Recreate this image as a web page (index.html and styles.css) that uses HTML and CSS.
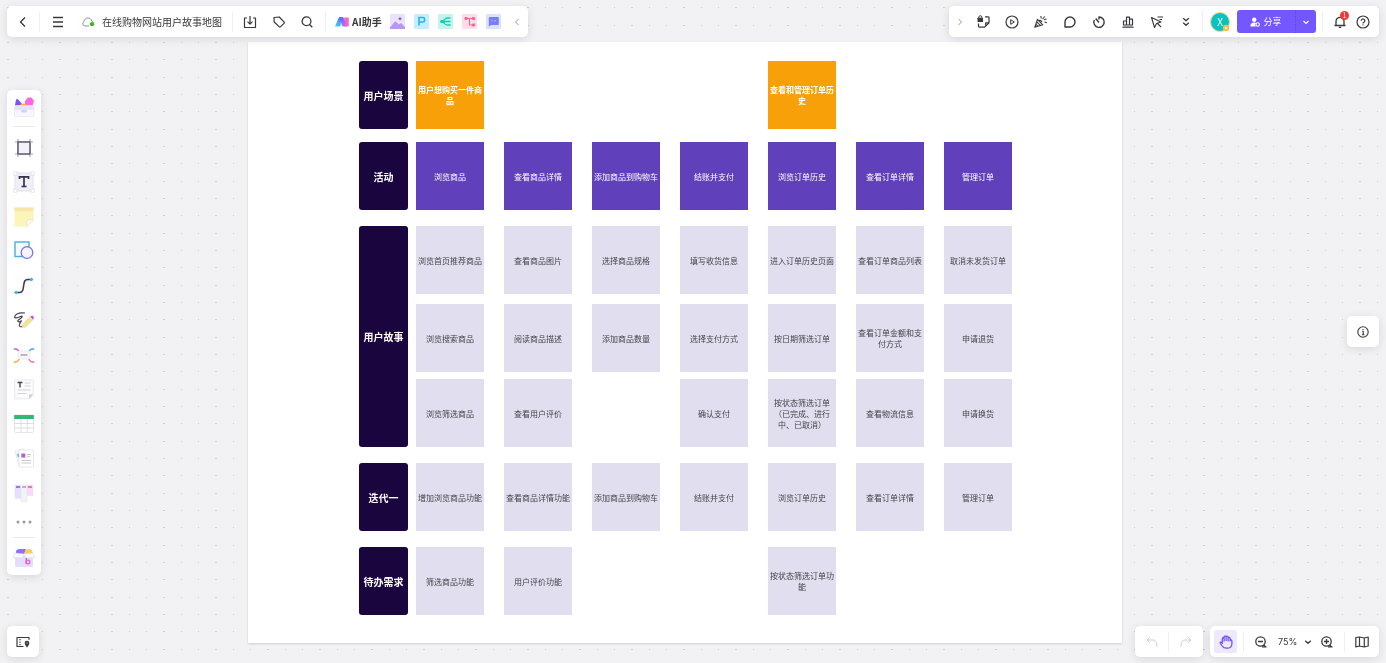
FILE: index.html
```html
<!DOCTYPE html>
<html lang="zh-CN">
<head>
<meta charset="utf-8">
<meta name="viewport" content="width=device-width, initial-scale=1">
<title>在线购物网站用户故事地图</title>
<link rel="stylesheet" href="styles.css">
</head>
<body>
<svg class="dots" aria-hidden="true">
  <defs>
    <pattern id="dot-grid" width="52" height="52" patternUnits="userSpaceOnUse">
      <g fill="#cdcdd2">
        <rect x="7" y="7" width="2" height="1"/><rect x="25" y="7" width="1" height="1"/><rect x="42" y="7" width="1" height="1"/>
        <rect x="7" y="25" width="2" height="1"/><rect x="25" y="25" width="1" height="1"/><rect x="42" y="25" width="1" height="1"/>
        <rect x="7" y="42" width="2" height="1"/><rect x="25" y="42" width="1" height="1"/><rect x="42" y="42" width="1" height="1"/>
      </g>
    </pattern>
  </defs>
  <rect width="100%" height="100%" fill="url(#dot-grid)"/>
</svg>

<main class="board">
  <section class="row row-scene">
    <h2 class="label">用户场景</h2>
    <div class="cards">
      <div class="card scene">用户想购买一件商品</div>
      <div class="card scene col-5">查看和管理订单历史</div>
    </div>
  </section>
  <section class="row">
    <h2 class="label">活动</h2>
    <div class="cards">
      <div class="card activity">浏览商品</div>
      <div class="card activity">查看商品详情</div>
      <div class="card activity">添加商品到购物车</div>
      <div class="card activity">结账并支付</div>
      <div class="card activity">浏览订单历史</div>
      <div class="card activity">查看订单详情</div>
      <div class="card activity">管理订单</div>
    </div>
  </section>
  <section class="row">
    <h2 class="label">用户故事</h2>
    <div class="cards stories">
      <div class="card">浏览首页推荐商品</div>
      <div class="card">查看商品图片</div>
      <div class="card">选择商品规格</div>
      <div class="card">填写收货信息</div>
      <div class="card">进入订单历史页面</div>
      <div class="card">查看订单商品列表</div>
      <div class="card">取消未发货订单</div>
      <div class="card">浏览搜索商品</div>
      <div class="card">阅读商品描述</div>
      <div class="card">添加商品数量</div>
      <div class="card">选择支付方式</div>
      <div class="card">按日期筛选订单</div>
      <div class="card">查看订单金额和支付方式</div>
      <div class="card">申请退货</div>
      <div class="card">浏览筛选商品</div>
      <div class="card">查看用户评价</div>
      <div class="card col-4">确认支付</div>
      <div class="card">按状态筛选订单（已完成、进行中、已取消）</div>
      <div class="card">查看物流信息</div>
      <div class="card">申请换货</div>
    </div>
  </section>
  <section class="row">
    <h2 class="label">迭代一</h2>
    <div class="cards">
      <div class="card">增加浏览商品功能</div>
      <div class="card">查看商品详情功能</div>
      <div class="card">添加商品到购物车</div>
      <div class="card">结账并支付</div>
      <div class="card">浏览订单历史</div>
      <div class="card">查看订单详情</div>
      <div class="card">管理订单</div>
    </div>
  </section>
  <section class="row">
    <h2 class="label">待办需求</h2>
    <div class="cards">
      <div class="card">筛选商品功能</div>
      <div class="card">用户评价功能</div>
      <div class="card col-5">按状态筛选订单功能</div>
    </div>
  </section>
</main>

<header class="panel bar bar-file">
  <button class="btn w32" aria-label="返回"><svg class="ico" width="16" height="16" viewBox="0 0 16 16"><path d="M10 3.500 5.500 8l4.500 4.500" stroke-width="1.300"/></svg></button>
  <span class="sep"></span>
  <button class="btn w36" aria-label="菜单"><svg class="ico" width="16" height="16" viewBox="0 0 16 16"><path d="M3 3.500h10M3 8h10M3 12.500h10" stroke-width="1.300"/></svg></button>
  <span class="btn w24"><svg class="ico" width="16" height="16" viewBox="0 0 16 16"><path d="M9 12H4.800A2.400 2.400 0 0 1 4 7.500C4.200 5.300 6 4 7.900 4c1.900 0 3.400 1.200 3.800 3.100.9.200 1.500.7 1.900 1.400" stroke="#909095" stroke-width="1"/><circle cx="12" cy="10.200" r="2.100" fill="#38b71b" stroke="none"/></svg></span>
  <h1 class="title">在线购物网站用户故事地图</h1>
  <span class="sep"></span>
  <button class="btn w34" aria-label="导出"><svg class="ico" width="16" height="16" viewBox="0 0 16 16"><path d="M5 4H2.500v9.500h11V4H11M8 2v8M5.500 7.600 8 10.100l2.500-2.500" stroke-width="1.200"/></svg></button>
  <button class="btn w24" aria-label="标签"><svg class="ico" width="16" height="16" viewBox="0 0 16 16"><path d="M3 3.500 8.200 3l5 5.200q.5.500 0 1l-3.800 3.700q-.5.500-1 0L3.200 8Z" stroke-width="1.200"/></svg></button>
  <button class="btn w32" aria-label="搜索"><svg class="ico" width="16" height="16" viewBox="0 0 16 16"><circle cx="7.500" cy="7.300" r="4.400" stroke-width="1.300"/><path d="m10.700 10.700 2.600 2.600" stroke-width="1.300"/></svg></button>
  <span class="sep gap-l2"></span>
  <button class="ai"><svg width="14" height="10" viewBox="0 0 14 10"><defs><linearGradient id="ai-a" x1="0" y1="1" x2="1" y2="0"><stop stop-color="#2be5f2"/><stop offset="1" stop-color="#5a6aff"/></linearGradient><linearGradient id="ai-b" x1="0" y1="0" x2="1" y2="1"><stop stop-color="#5a62ff"/><stop offset=".6" stop-color="#9d6df8"/><stop offset="1" stop-color="#e66ae0"/></linearGradient></defs><path d="M9 .5h4q.8 0 .8.800v7q0 1.200-1.300 1.200H10Z" fill="#ff66be"/><path d="M0 9.500 3.500.9Q4 0 5 0h1.500L5.500 8.200Q5 9.500 3.800 9.500Z" fill="url(#ai-a)"/><path d="M4.500 0h2.700q1 0 1.500 1l3.300 7q.5 1.500-1 1.500H8.500Q7.500 9.500 7 8.500Z" fill="url(#ai-b)"/></svg><span>AI助手</span></button>
  <button class="btn w24 gap-l4" aria-label="AI 图片"><svg width="15" height="15" viewBox="0 0 15 15"><rect width="15" height="15" rx="1" fill="#ebe3fd"/><path d="M0 13.500 4.500 8q1-1 2 0L9 10.500l1-1q.8-.8 1.600 0L15 13v2H0Z" fill="#b79af0"/><path d="M10 2.500q.3 1.900 2.200 2.200Q10.300 5 10 6.900 9.700 5 7.800 4.700 9.700 4.400 10 2.500Z" fill="#865be8"/></svg></button>
  <button class="btn w24" aria-label="AI PPT"><svg width="15" height="15" viewBox="0 0 15 15"><rect width="15" height="15" rx="1" fill="#c5edff"/><path d="M5 11.500v-8h4q1.500 0 1.500 1.500v1.500Q10.500 8 9 8H5" fill="none" stroke="#25b2f2" stroke-width="1.600"/></svg></button>
  <button class="btn w24" aria-label="AI 思维导图"><svg width="15" height="15" viewBox="0 0 15 15"><rect width="15" height="15" rx="1" fill="#c3f5ed"/><path d="M12.500 4H9.500Q7.500 4 6.500 5.500L5 7.500l1.500 2Q7.500 11 9.500 11h3M5 7.500h7.500" fill="none" stroke="#17cdb4" stroke-width="1.300"/><rect x="2" y="6" width="4" height="3" rx="1.500" fill="#17cdb4"/></svg></button>
  <button class="btn w24" aria-label="AI 流程图"><svg width="15" height="15" viewBox="0 0 15 15"><rect width="15" height="15" rx="1" fill="#ffdce8"/><path d="M4.500 4.500h7M7.500 4.500v6.500h4" fill="none" stroke="#fa5f94"/><g fill="#fa5f94"><rect x="2.500" y="3" width="3" height="3" rx="1"/><rect x="10" y="3" width="3" height="3" rx="1"/><rect x="10" y="9.500" width="3" height="3" rx="1"/></g></svg></button>
  <button class="btn w24" aria-label="AI 对话"><svg width="15" height="15" viewBox="0 0 15 15"><rect width="15" height="15" rx="1" fill="#d7e3ff"/><path d="M4 3h8q.8 0 .8.800v6.400q0 .8-.8.800H5.500L2.800 12.500V4Q2.800 3 4 3Z" fill="#7c7cf7"/><path d="M6 6v1.500M9.300 6v1.500" stroke="#b9c0ff"/></svg></button>
  <button class="btn w22" aria-label="收起"><svg class="ico" width="12" height="12" viewBox="0 0 12 12"><path d="M7.500 3 4.500 6l3 3" stroke="#999"/></svg></button>
</header>

<nav class="panel bar bar-share" aria-label="协作">
  <button class="btn w22" aria-label="展开"><svg class="ico" width="12" height="12" viewBox="0 0 12 12"><path d="m4.500 3 3 3-3 3" stroke="#999"/></svg></button>
  <button class="btn w26" aria-label="私密模式"><svg class="ico" width="16" height="16" viewBox="0 0 16 16"><path d="M9 2.800h3.200q.8 0 .8.800v5.200l-2.500 2.500h-.8M2.500 9.500v2.800q0 .8.800.8h5.400l1-1V8.800h2.800" stroke-width="1.200"/><rect x="1.500" y="3.800" width="5.500" height="4.200" rx=".5" fill="#39393d" stroke="none"/><path d="M2.800 4V3.200a1.500 1.500 0 0 1 3 0V4"/></svg></button>
  <button class="btn w29" aria-label="演示"><svg class="ico" width="16" height="16" viewBox="0 0 16 16"><circle cx="8" cy="8" r="6" stroke-width="1.200"/><path d="M6.700 5.700v4.600l3.600-2.300Z"/></svg></button>
  <button class="btn w29" aria-label="庆祝"><svg class="ico" width="16" height="16" viewBox="0 0 16 16"><path d="m4.500 5.300-2.700 8 8-2.500ZM3.800 7.800l4 4M3 10.300l2.200 2.200M7.800 2l.5 2.500M11.800 2.500 9.500 5M11.500 8l2.500.8M11 5.800l2.500-.8M6 6.500q2-.5 3 1.500" stroke-width="1.100"/></svg></button>
  <button class="btn w29" aria-label="评论"><svg class="ico" width="16" height="16" viewBox="0 0 16 16"><path d="M3 13V8a5 5 0 1 1 5 5Z" stroke-width="1.400"/></svg></button>
  <button class="btn w29" aria-label="计时器"><svg class="ico" width="16" height="16" viewBox="0 0 16 16"><path d="M8 5.500V3a5.200 5.200 0 1 1-4.700 3M4.700 4.500 8 8.500" stroke-width="1.400"/></svg></button>
  <button class="btn w29" aria-label="投票"><svg class="ico" width="16" height="16" viewBox="0 0 16 16"><path d="M2.500 13.200h11M3.500 11V7h3v4M6.500 11V3.200h3V11M9.500 11V5.200h3V11M3 11h10" stroke-width="1.200"/></svg></button>
  <button class="btn w29" aria-label="激光笔"><svg class="ico" width="16" height="16" viewBox="0 0 16 16"><path d="m2.500 3.500 3 10 2-4 4.500-1.500ZM8 9l4 4M8.500 3h5.500M10.500 5.500H13" stroke-width="1.100"/></svg></button>
  <button class="btn w29" aria-label="更多"><svg class="ico" width="16" height="16" viewBox="0 0 16 16"><path d="M5.200 4.200 8 6.700l2.800-2.500M5.200 8.700 8 11.200l2.800-2.500" stroke-width="1.300"/></svg></button>
  <span class="sep gap-l2"></span>
  <button class="btn w34" aria-label="用户 X"><span class="avatar">X<svg class="crown" width="8" height="8" viewBox="0 0 8 8"><circle cx="4" cy="4" r="3.200" fill="#ffbb45"/><circle cx="4" cy="4" r="1.300" fill="#ffe9c2"/></svg></span></button>
  <div class="share">
    <button class="share-main"><svg width="10" height="10" viewBox="0 0 10 10"><circle cx="4.200" cy="2.700" r="2.200" fill="#fff"/><path d="M.3 9.500q0-4 3.900-4 1.300 0 2 .5L5 7.500l.8 2Z" fill="#fff"/><circle cx="7.700" cy="7.500" r="1.700" fill="none" stroke="#fff" stroke-width="1.100"/></svg><span>分享</span></button>
    <button class="share-more" aria-label="分享选项"><svg width="10" height="10" viewBox="0 0 10 10"><path d="m2.500 4 2.500 2.500L7.500 4" fill="none" stroke="#fff" stroke-width="1.200"/></svg></button>
  </div>
  <span class="sep gap-share"></span>
  <button class="btn w24 notify" aria-label="通知"><svg class="ico" width="16" height="16" viewBox="0 0 16 16"><path d="M2.500 11.500h11M4 11.500V7.300a4 4 0 0 1 8 0v4.200M6.800 13.300h2.400" stroke-width="1.300"/></svg><span class="badge">1</span></button>
  <button class="btn w22" aria-label="帮助"><svg class="ico" width="16" height="16" viewBox="0 0 16 16"><circle cx="8" cy="8" r="6" stroke-width="1.200"/><path d="M6.200 6.700a1.800 1.800 0 1 1 2.700 1.600q-.9.400-.9 1.300M8 10.500v1" stroke-width="1.200"/></svg></button>
</nav>

<aside class="panel tools" aria-label="工具">
  <button class="tool-top" aria-label="素材"><svg width="24" height="24" viewBox="0 0 24 24"><path d="m3 10 1-5q.5-1.500 2-.8L10 9v3H3Z" fill="#7656f5"/><path d="M13 10V6l3-3.500h3.500L22 6l-1.500 5H13Z" fill="#ff66df"/><path d="M7 11a5 4.500 0 0 1 9 0Z" fill="#fcaa3c"/><rect x="2.500" y="10.500" width="19.500" height="11" rx="1.200" fill="#f7f7fd" stroke="#e2e1ea" stroke-width=".6"/><path d="M3 10.500h18.500v4.500H3Z" fill="#e6e3fa"/><rect x="9" y="15" width="6" height="2.600" rx="1" fill="#d5d0fa"/></svg></button>
  <hr>
  <div class="tool-list">
    <button aria-label="画框"><svg width="22" height="22" viewBox="0 0 22 22"><path d="M2 5h18M2 17h18M5 2v18M17 2v18" stroke="#aaa7b8" stroke-width="1.200" stroke-dasharray="3 1"/><rect x="5" y="5" width="12" height="12" fill="#f3f2fa" stroke="#565063" stroke-width="1.400"/></svg></button>
    <button aria-label="文本"><svg width="22" height="22" viewBox="0 0 22 22"><rect x="2" y="2" width="18" height="18" fill="#f0eff8" stroke="#e4e3ec"/><path d="M6.500 8V5.800h9V8M11 5.800V15.500M8.500 15.500h5" fill="none" stroke="#39324e" stroke-width="1.700"/><g fill="#fff" stroke="#dcdbe3" stroke-width=".7"><rect x=".8" y=".8" width="3.200" height="3.200"/><rect x="18" y=".8" width="3.200" height="3.200"/><rect x=".8" y="18" width="3.200" height="3.200"/><rect x="18" y="18" width="3.200" height="3.200"/></g></svg></button>
    <button aria-label="便签"><svg width="22" height="22" viewBox="0 0 22 22"><path d="M1.500 1.500h19V14l-6.500 6.500H2.500q-1 0-1-1Z" fill="#fbf4bb"/><path d="M1.500 1.500h19v3h-19Z" fill="#f7e2a8"/><path d="M2 5h18.500" stroke="#f0dc9c" stroke-width=".8" stroke-dasharray="1 1"/><path d="M14 20.500v-5.200q0-1.300 1.300-1.300h5.200Z" fill="#fffdf4" stroke="#e4e0cc" stroke-width=".7"/></svg></button>
    <button aria-label="形状"><svg width="22" height="22" viewBox="0 0 22 22"><rect x="2" y="2" width="14" height="14.500" fill="#f5fcff" stroke="#41b3e0" stroke-width="1.400"/><circle cx="14" cy="12.500" r="5.800" fill="#f5f3ff" stroke="#7973ea" stroke-width="1.300"/></svg></button>
    <button aria-label="连线"><svg width="22" height="22" viewBox="0 0 22 22"><path d="M4 17.500h2.500q3 0 3.500-3l1.200-7Q11.700 4.500 15 4.500h3" fill="none" stroke="#403750" stroke-width="1.500"/><path d="m1 17.500 2-2 2 2-2 2ZM16.500 4.500l2-2 2 2-2 2Z" fill="#36b8ee"/></svg></button>
    <button aria-label="画笔"><svg width="22" height="22" viewBox="0 0 22 22"><path d="M12 4Q4 3 2 7c-1.500 3 2.500 2 5.500.5C10.500 6 9 9 6 10.500c-3 2 0 3 2 1.500 2-1.500-3.500 4-1 5.500 1 .5 2 0 2.500-.5" fill="none" stroke="#493f57" stroke-width="1.200"/><path d="m9.500 15 8-7.500 3 3-8 7.500-3.500.5Z" fill="#f6e391" stroke="#ddd5ba" stroke-width=".7"/><path d="m17.500 7.500 1.500-1q2 .5 1.800 2.500l-1 1.500Z" fill="#b84ae8"/></svg></button>
    <button aria-label="思维导图"><svg width="22" height="22" viewBox="0 0 22 22"><g fill="none" stroke-width="1.400"><path d="M.8 5h2Q4.500 5 5.500 7L7 8.500" stroke="#b06be0"/><path d="M21.200 5h-2q-1.700 0-2.700 2L15 8.500" stroke="#4aa9ee"/><path d="M.8 18h2q1.700 0 2.700-2L7 14" stroke="#f7a637"/><path d="M21.200 18h-2q-1.700 0-2.700-2L15 14" stroke="#ef6b96"/></g><rect x="5" y="7" width="12" height="8" rx="1" fill="#f6f6f8" stroke="#e6e5eb" stroke-width=".6"/><path d="M7.500 11h7" stroke="#bbb9c2" stroke-width="2"/></svg></button>
    <button aria-label="文档"><svg width="22" height="22" viewBox="0 0 22 22"><path d="M2.500 2h17q.8 0 .8.800V16.500L16 20.800H2.500q-.8 0-.8-.8V2.800q0-.8.800-.8Z" fill="#fcfcfd" stroke="#dedde4" stroke-width=".7"/><path d="M4.500 4.500h5M7 4.500v5" stroke="#493f5a" stroke-width="1.400"/><path d="M11.500 5h6M11.500 8h6M4.500 12h13M4.500 15.500h9" stroke="#d2d1d8"/><path d="M16 20.800v-3.500q0-.8.800-.8h3.500Z" fill="#cbc9d2"/></svg></button>
    <button aria-label="表格"><svg width="22" height="22" viewBox="0 0 22 22"><rect x="1.500" y="2" width="19" height="17.500" rx=".8" fill="#fff" stroke="#dadbe0" stroke-width=".7"/><path d="M1.200 2h19.600v4H1.200Z" fill="#31b675"/><path d="M1.500 10.500h19M1.500 15h19M8 6v13.500M14.300 6v13.500" stroke="#d6d7dc" stroke-width=".8"/></svg></button>
    <button aria-label="卡片"><svg width="22" height="22" viewBox="0 0 22 22"><path d="m2 4 8-2 5 16-9 1.500Z" fill="#f6f6f9" stroke="#e1e1e7" stroke-width=".6"/><path d="m4 7 3-.7v3.500l-2.300.5Z" fill="#49b9ef"/><rect x="6" y="3" width="14.500" height="17" rx="1" fill="#fff" stroke="#dedee5" stroke-width=".7"/><rect x="8.300" y="6.500" width="4" height="4" fill="#bd5adc"/><path d="M14 7.500h4M14 9.800h3M8.500 13.500h9.500M8.500 16h9.500" stroke="#c8c7d0"/></svg></button>
    <button aria-label="看板"><svg width="22" height="22" viewBox="0 0 22 22"><g stroke="#e5e3ee" stroke-width=".6"><path d="M2 3h6v13.500H2Z" fill="#e8dffd"/><path d="M14 3h6v10.500h-6Z" fill="#fcd9f5"/><path d="M8 3h6v17H8Z" fill="#f3f3f5"/></g><path d="M3 5h4" stroke="#9774f3" stroke-width="2"/><path d="M9 5h4" stroke="#b8b7bd" stroke-width="2"/><path d="M15 5h4" stroke="#fa6bcb" stroke-width="2"/></svg></button>
  </div>
  <button class="tool-more" aria-label="更多工具"><svg width="22" height="6" viewBox="0 0 22 6"><g fill="#9b9ba1"><circle cx="5" cy="3" r="1.500"/><circle cx="11" cy="3" r="1.500"/><circle cx="17" cy="3" r="1.500"/></g></svg></button>
  <hr>
  <button class="tool-box" aria-label="模板"><svg width="24" height="24" viewBox="0 0 24 24"><path d="M4 6q0-3 4-3h6l-2 6H4Z" fill="#8d72f6"/><path d="M12 8q1-5 5-5 3 0 4 4l-2 2Z" fill="#fbcd54"/><path d="M3 8h18v11.500q0 1.500-1.500 1.500h-15Q3 21 3 19.500Z" fill="#e4defb"/><path d="m3 7 9 1 9-1 2 4.500-9 .5-2-3-2 3-9-.5Z" fill="#fbfaff" stroke="#dad6ee" stroke-width=".6"/><path d="M14.300 12v6" stroke="#9d67ef" stroke-width="1.300"/><circle cx="16" cy="16" r="1.900" fill="none" stroke="#e65cd0" stroke-width="1.200"/></svg></button>
</aside>

<aside class="panel info"><button class="btn w32" aria-label="信息"><svg class="ico" width="14" height="14" viewBox="0 0 14 14"><circle cx="7" cy="7" r="5.200" stroke-width="1.100"/><path d="M6.200 6.200h1V9.700M6 9.800h2.400M7 4v1" stroke-width="1.100"/></svg></button></aside>

<div class="panel minimap"><button class="btn w32" aria-label="小地图"><svg class="ico" width="16" height="16" viewBox="0 0 16 16"><path d="M8.500 12.500H2v-9h12v2.300M5 5v1.200M5 7.500v1.200M5 10v1.200" stroke-width="1.200"/><path d="M12 6.700a2.300 2.300 0 0 1 2.300 2.300c0 1.900-2.300 4.500-2.300 4.500S9.700 10.900 9.700 9A2.300 2.300 0 0 1 12 6.700Z" fill="#39393d" stroke="none"/><circle cx="12" cy="9" r=".6" fill="#fff" stroke="none"/></svg></button></div>

<footer class="bottom">
  <div class="panel bar">
    <button class="btn w33" aria-label="撤销" disabled><svg class="ico" width="16" height="16" viewBox="0 0 16 16"><path d="M6 3 3 6l3 3M3 6h6q4 0 4 6.500" stroke="#cecdd2"/></svg></button>
    <span class="sep"></span>
    <button class="btn w34" aria-label="重做" disabled><svg class="ico" width="16" height="16" viewBox="0 0 16 16"><path d="m10 3 3 3-3 3M13 6H7q-4 0-4 6.500" stroke="#cecdd2"/></svg></button>
  </div>
  <div class="panel bar view">
    <button class="hand" aria-label="抓手"><svg width="16" height="16" viewBox="0 0 16 16"><path d="M4.300 8.500V4.700q0-1 .9-1t.9 1V7.500M6.100 7V3q0-1 1-1t1 1v4M8.100 7V3q0-1 1-1t1 1v4M10.100 7.500V4.300q0-1 1-1t1 1v2.500q.2-1 1-.9.8.1.800 1v2.800q0 4.500-5 4.500-3.500 0-4.700-2.200L2.300 9.500q-.5-1 .3-1.400.8-.3 1.700 1v1" fill="none" stroke="#6b4af0" stroke-width="1.200" stroke-linejoin="round"/></svg></button>
    <span class="sep"></span>
    <button class="btn w34" aria-label="缩小"><svg class="ico" width="16" height="16" viewBox="0 0 16 16"><circle cx="7.500" cy="7.500" r="4.700" stroke-width="1.300"/><path d="M5 7.500h5M10.500 11l2 1.800M9 12.800h4.500" stroke-width="1.300"/></svg></button>
    <button class="percent">75%<svg class="ico" width="10" height="10" viewBox="0 0 10 10"><path d="m2.200 3.700 2.800 2.600 2.800-2.600" stroke-width="1.300"/></svg></button>
    <button class="btn w30" aria-label="放大"><svg class="ico" width="16" height="16" viewBox="0 0 16 16"><circle cx="7.500" cy="7.500" r="4.700" stroke-width="1.300"/><path d="M5 7.500h5M7.500 5v5M10.500 11l2 1.800M9 12.800h4.500" stroke-width="1.300"/></svg></button>
    <span class="sep gap-l2"></span>
    <button class="btn w34" aria-label="地图"><svg class="ico" width="16" height="16" viewBox="0 0 16 16"><path d="M1.800 3.500 5.500 3v9l-3.700.8ZM5.500 3 10.300 4v9l-4.800-1M10.300 4l3.900-1v9l-3.900 1" stroke-width="1.200"/></svg></button>
  </div>
</footer>
</body>
</html>
```
FILE: styles.css
```css
* {
  box-sizing: border-box;
}

body {
  margin: 0;
  min-height: 100vh;
  overflow: hidden;
  background: #f2f2f5;
  color: #39393d;
  font-family: "Noto Sans CJK SC", sans-serif;
  font-size: 10px;
  text-spacing-trim: space-all;
}

button {
  margin: 0;
  padding: 0;
  border: 0;
  background: none;
  color: inherit;
  font: inherit;
  cursor: pointer;
}

svg {
  display: block;
  flex: none;
}

.dots {
  position: fixed;
  inset: 0;
  width: 100%;
  height: 100%;
}

/* Story map placed on the free canvas */
.board {
  position: absolute;
  left: 248px;
  top: 42px;
  display: flex;
  flex-direction: column;
  gap: 16px;
  padding: 19px 110px 28px 111px;
  background: #fff;
  box-shadow: 0 1px 2px #00000026;
}

.row {
  display: flex;
  gap: 8px;
}

.row-scene {
  margin-bottom: -3px;
}

.label {
  display: flex;
  align-items: center;
  justify-content: center;
  width: 49px;
  margin: 0;
  border-radius: 3px;
  background: #1a053f;
  color: #fff;
  font-size: 10px;
  font-weight: 700;
}

.cards {
  display: grid;
  grid-template-columns: repeat(7, 68px);
  gap: 7px 20px;
}

.stories {
  grid-template-rows: 71px auto auto;
}

.card {
  display: flex;
  align-items: center;
  justify-content: center;
  height: 68px;
  padding: 0 1px;
  background: #e1dfef;
  color: #444248;
  font-size: 8px;
  line-height: 11px;
  text-align: center;
}

.scene {
  background: #f8a008;
  color: #fff;
  font-weight: 700;
}

.activity {
  background: #6040bb;
  color: #fff;
}

.col-4 {
  grid-column: 4;
}

.col-5 {
  grid-column: 5;
}

/* Floating panels */
.panel {
  border-radius: 5px;
  background: #fff;
  box-shadow: 0 2px 10px #0000001c;
}

.bar {
  display: flex;
  align-items: center;
  height: 31px;
}

.bar-file {
  position: fixed;
  left: 7px;
  top: 6px;
}

.bar-share {
  position: fixed;
  right: 7px;
  top: 6px;
  padding-right: 5px;
}

.sep {
  width: 1px;
  height: 20px;
  background: #efeff1;
}

.gap-l2 {
  margin-left: 2px;
}

.gap-l4 {
  margin-left: 4px;
}

.gap-share {
  margin: 0 5px 0 6px;
}

.btn {
  display: flex;
  align-items: center;
  justify-content: center;
  height: 31px;
}

.w22 { width: 22px; }
.w24 { width: 24px; }
.w26 { width: 26px; }
.w29 { width: 29px; }
.w30 { width: 30px; }
.w32 { width: 32px; }
.w33 { width: 33px; }
.w34 { width: 34px; }
.w36 { width: 36px; }

.ico {
  fill: none;
  stroke: #39393d;
  stroke-linejoin: round;
}

.title {
  margin: 0;
  padding: 0 10px 0 2px;
  font-size: 10px;
  font-weight: 400;
}

.ai {
  display: flex;
  align-items: center;
  gap: 3px;
  padding-left: 9px;
  font-weight: 700;
}

.avatar {
  position: relative;
  display: flex;
  align-items: center;
  justify-content: center;
  width: 20px;
  height: 20px;
  border: 1px solid #ffd591;
  border-radius: 50%;
  background: #08c3bf;
  color: #fff;
  font-size: 10px;
}

.crown {
  position: absolute;
  right: -1px;
  bottom: -1px;
}

.share {
  display: flex;
  height: 23px;
  border-radius: 3px;
  background: #7557ff;
  color: #fff;
  font-size: 9px;
}

.share-main {
  display: flex;
  align-items: center;
  justify-content: center;
  gap: 3px;
  width: 58px;
}

.share-more {
  display: flex;
  align-items: center;
  justify-content: center;
  width: 21px;
  border-left: 1px dotted #5f43df;
}

.notify {
  position: relative;
}

.badge {
  position: absolute;
  top: 5px;
  right: 3px;
  width: 9px;
  height: 9px;
  border-radius: 50%;
  background: #f5382f;
  color: #fff;
  font-size: 7px;
  line-height: 9px;
}

.tools {
  position: fixed;
  left: 7px;
  top: 2px;
  bottom: 0;
  display: flex;
  flex-direction: column;
  width: 34px;
  height: fit-content;
  margin: auto 0;
}

.tools hr {
  width: 22px;
  height: 1px;
  margin: 3px auto;
  border: 0;
  background: #ebebee;
}

.tools button {
  display: flex;
  align-items: center;
  justify-content: center;
  width: 34px;
  height: 35px;
}

.tools .tool-list button:nth-child(even) {
  height: 34px;
}

.tools .tool-top {
  height: 33px;
}

.tools .tool-more {
  height: 24px;
}

.tools .tool-box {
  height: 34px;
}

.info {
  position: fixed;
  right: 7px;
  top: 0;
  bottom: 0;
  height: fit-content;
  margin: auto 0;
}

.minimap {
  position: fixed;
  left: 7px;
  bottom: 6px;
}

.bottom {
  position: fixed;
  right: 7px;
  bottom: 6px;
  display: flex;
  gap: 7px;
}

.view {
  padding-left: 4px;
}

.hand {
  display: flex;
  align-items: center;
  justify-content: center;
  width: 23px;
  height: 23px;
  margin-right: 6px;
  border-radius: 2px;
  background: #eee9ff;
}

.percent {
  display: flex;
  align-items: center;
  gap: 6px;
  width: 34px;
  font-family: Inter, sans-serif;
  font-size: 9px;
}
```
